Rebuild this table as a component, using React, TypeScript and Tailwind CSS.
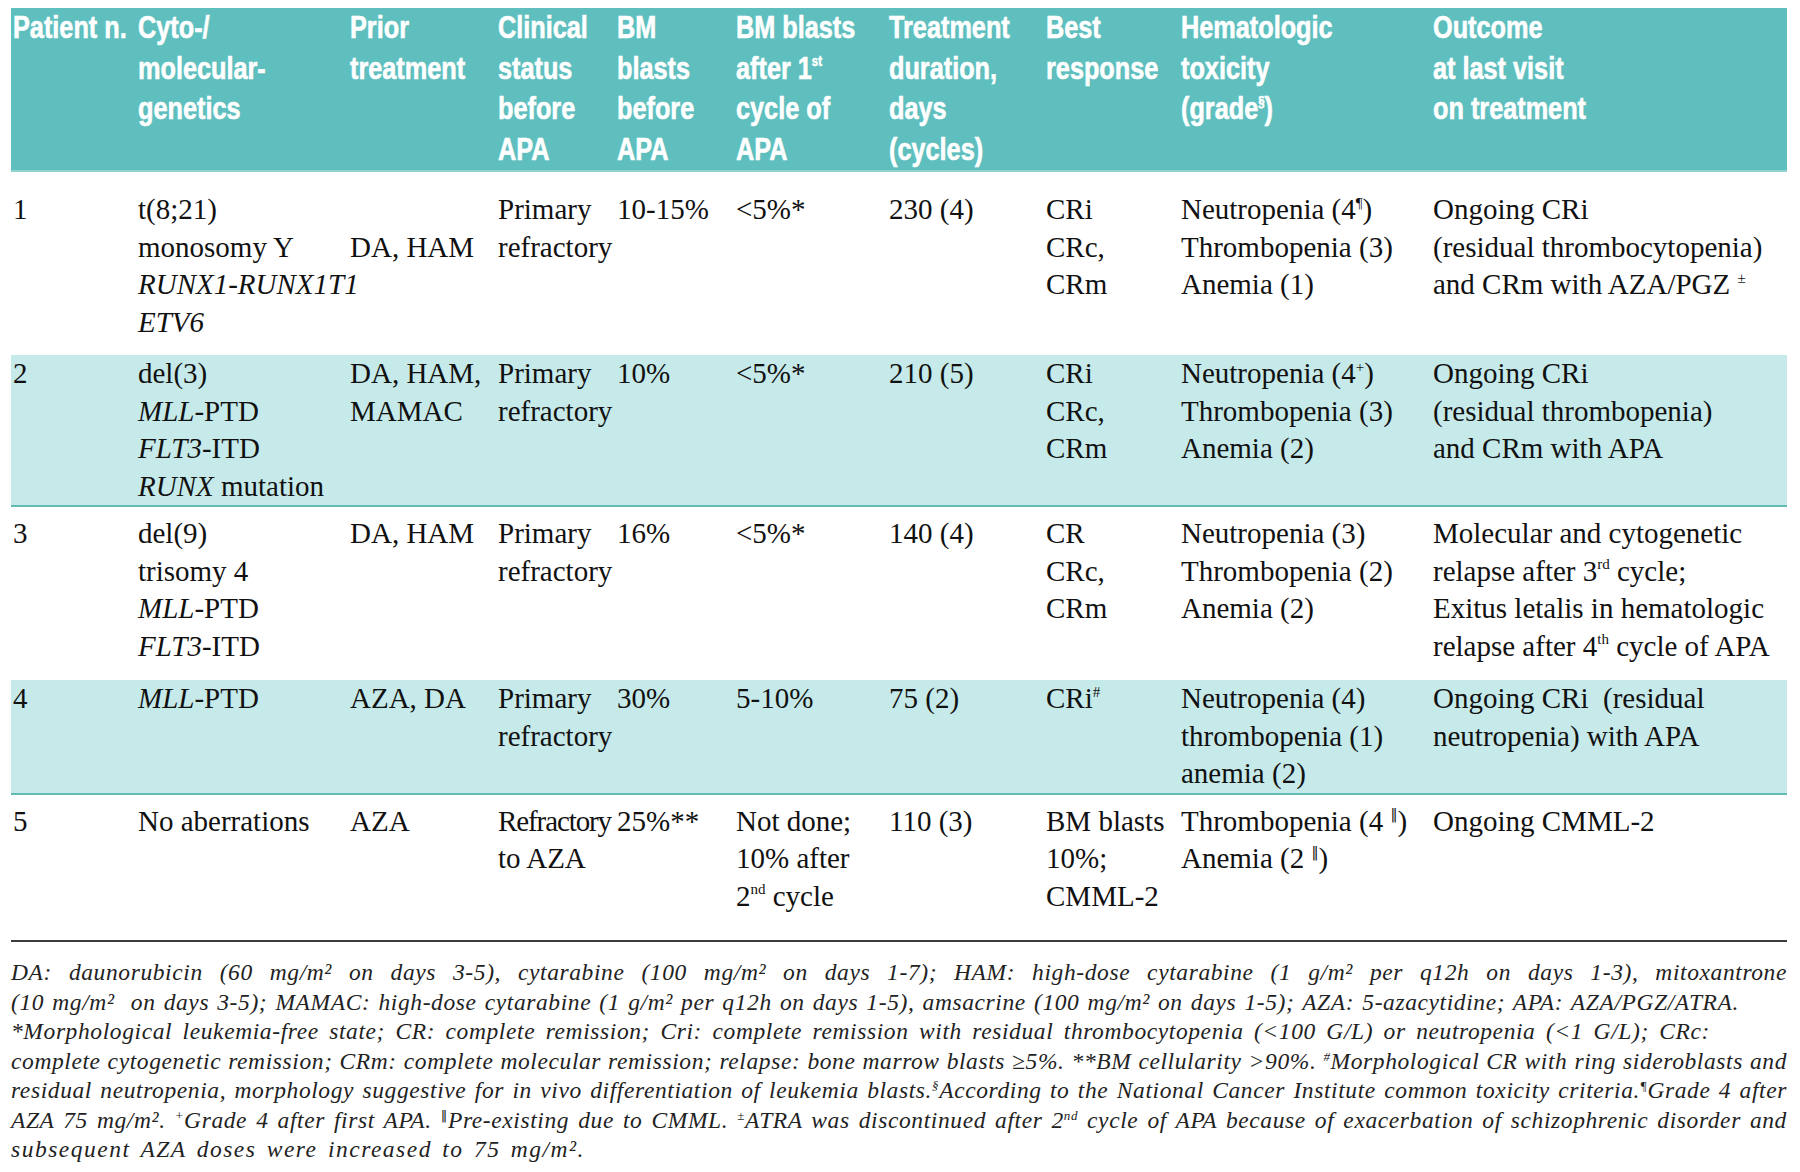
import React from "react";

const GRID =
  "grid grid-cols-[127px_212px_148px_119px_119px_153px_157px_135px_252px_354px]";

function Sup({ children }: { children: React.ReactNode }) {
  return <sup className="text-[15px] -top-[0.75em]">{children}</sup>;
}

function Bars() {
  return <sup className="text-[14px] -top-[0.8em] font-['DejaVu_Sans',sans-serif]">‖</sup>;
}

function Cell({ lines, first }: { lines: React.ReactNode[]; first?: boolean }) {
  return (
    <div className={first ? "whitespace-nowrap pl-[2px]" : "whitespace-nowrap"}>
      {lines.map((l, i) => (
        <div key={i}>{l === "" ? "\u00a0" : l}</div>
      ))}
    </div>
  );
}

function HeadCell({ lines, first }: { lines: React.ReactNode[]; first?: boolean }) {
  return (
    <div className={first ? "whitespace-nowrap pl-[2px]" : "whitespace-nowrap"}>
      <div className="origin-left scale-x-[0.815]">
        {lines.map((l, i) => (
          <div key={i}>{l}</div>
        ))}
      </div>
    </div>
  );
}

function Row({ cells, cls }: { cells: React.ReactNode[][]; cls: string }) {
  return (
    <div className={GRID + " " + cls}>
      {cells.map((c, i) => (
        <Cell key={i} lines={c} first={i === 0} />
      ))}
    </div>
  );
}

const I = ({ children }: { children: React.ReactNode }) => <i>{children}</i>;

export default function App() {
  const head: React.ReactNode[][] = [
    ["Patient n."],
    ["Cyto-/", "molecular-", "genetics"],
    ["Prior", "treatment"],
    ["Clinical", "status", "before", "APA"],
    ["BM", "blasts", "before", "APA"],
    [
      "BM blasts",
      <span>
        after 1<sup className="text-[14px] -top-[0.9em]">st</sup>
      </span>,
      "cycle of",
      "APA",
    ],
    ["Treatment", "duration,", "days", "(cycles)"],
    ["Best", "response"],
    [
      "Hematologic",
      "toxicity",
      <span>
        (grade<sup className="text-[14px] -top-[0.9em]">§</sup>)
      </span>,
    ],
    ["Outcome", "at last visit", "on treatment"],
  ];

  const r1: React.ReactNode[][] = [
    ["1"],
    ["t(8;21)", "monosomy Y", <I>RUNX1-RUNX1T1</I>, <I>ETV6</I>],
    ["", "DA, HAM"],
    ["Primary", "refractory"],
    ["10-15%"],
    ["<5%*"],
    ["230 (4)"],
    ["CRi", "CRc,", "CRm"],
    [
      <span>
        Neutropenia (4<Sup>¶</Sup>)
      </span>,
      "Thrombopenia (3)",
      "Anemia (1)",
    ],
    [
      "Ongoing CRi",
      "(residual thrombocytopenia)",
      <span>
        and CRm with AZA/PGZ <Sup>±</Sup>
      </span>,
    ],
  ];

  const r2: React.ReactNode[][] = [
    ["2"],
    [
      "del(3)",
      <span>
        <I>MLL</I>-PTD
      </span>,
      <span>
        <I>FLT3</I>-ITD
      </span>,
      <span>
        <I>RUNX</I> mutation
      </span>,
    ],
    ["DA, HAM,", "MAMAC"],
    ["Primary", "refractory"],
    ["10%"],
    ["<5%*"],
    ["210 (5)"],
    ["CRi", "CRc,", "CRm"],
    [
      <span>
        Neutropenia (4<Sup>+</Sup>)
      </span>,
      "Thrombopenia (3)",
      "Anemia (2)",
    ],
    ["Ongoing CRi", "(residual thrombopenia)", "and CRm with APA"],
  ];

  const r3: React.ReactNode[][] = [
    ["3"],
    [
      "del(9)",
      "trisomy 4",
      <span>
        <I>MLL</I>-PTD
      </span>,
      <span>
        <I>FLT3</I>-ITD
      </span>,
    ],
    ["DA, HAM"],
    ["Primary", "refractory"],
    ["16%"],
    ["<5%*"],
    ["140 (4)"],
    ["CR", "CRc,", "CRm"],
    ["Neutropenia (3)", "Thrombopenia (2)", "Anemia (2)"],
    [
      "Molecular and cytogenetic",
      <span>
        relapse after 3<Sup>rd</Sup> cycle;
      </span>,
      "Exitus letalis in hematologic",
      <span>
        relapse after 4<Sup>th</Sup> cycle of APA
      </span>,
    ],
  ];

  const r4: React.ReactNode[][] = [
    ["4"],
    [
      <span>
        <I>MLL</I>-PTD
      </span>,
    ],
    ["AZA, DA"],
    ["Primary", "refractory"],
    ["30%"],
    ["5-10%"],
    ["75 (2)"],
    [
      <span>
        CRi<Sup>#</Sup>
      </span>,
    ],
    ["Neutropenia (4)", "thrombopenia (1)", "anemia (2)"],
    ["Ongoing CRi\u00a0 (residual", "neutropenia) with APA"],
  ];

  const r5: React.ReactNode[][] = [
    ["5"],
    ["No aberrations"],
    ["AZA"],
    [<span className="tracking-[-1.1px]">Refractory</span>, "to AZA"],
    ["25%**"],
    [
      "Not done;",
      "10% after",
      <span>
        2<Sup>nd</Sup> cycle
      </span>,
    ],
    ["110 (3)"],
    ["BM blasts", "10%;", "CMML-2"],
    [
      <span>
        Thrombopenia (4 <Bars />)
      </span>,
      <span>
        Anemia (2 <Bars />)
      </span>,
    ],
    ["Ongoing CMML-2"],
  ];

  const fs = "text-[13px] -top-[0.6em]";
  const J = "whitespace-nowrap text-justify [text-align-last:justify]";

  return (
    <div className="w-[1800px] h-[1172px] bg-white overflow-hidden">
      <div className="ml-[11px] w-[1776px] pt-[11px]">
        {/* header */}
        <div className="bg-[#5ebfbe] h-[164px] border-b-2 border-[#8fd4d0] font-['Liberation_Sans','Arial',sans-serif] font-bold text-[31px] leading-[40.5px] text-white [-webkit-text-stroke:0.6px_#ffffff]">
          <div className={GRID + " -mt-[3px]"}>
            {head.map((c, i) => (
              <HeadCell key={i} lines={c} first={i === 0} />
            ))}
          </div>
        </div>

        <div className="font-['Liberation_Serif',serif] text-[29px] leading-[37.5px] text-[#111]">
          <Row cells={r1} cls="pt-[19px] pb-[14px]" />
          <Row cells={r2} cls="bg-[#c6eaea] pb-[0px] border-b-2 border-[#62bbb5]" />
          <Row cells={r3} cls="pt-[8px] pb-[15px]" />
          <Row cells={r4} cls="bg-[#c6eaea] pb-[0px] border-b-2 border-[#62bbb5]" />
          <Row cells={r5} cls="pt-[8px] pb-[25px]" />
        </div>

        <div className="border-t-2 border-[#3c3c3c] pt-[16px] font-['Liberation_Serif',serif] italic text-[23.5px] leading-[29.5px] tracking-[0.6px] text-[#222]">
          <div className={J + " w-[1776px]"}>
            DA: daunorubicin (60 mg/m² on days 3-5), cytarabine (100 mg/m² on days 1-7); HAM: high-dose
            cytarabine (1 g/m² per q12h on days 1-3), mitoxantrone
          </div>
          <div className={J + " w-[1728px]"}>
            (10 mg/m²&nbsp; on days 3-5); MAMAC: high-dose cytarabine (1 g/m² per q12h on days 1-5), amsacrine
            (100 mg/m² on days 1-5); AZA: 5-azacytidine; APA: AZA/PGZ/ATRA.
          </div>
          <div className={J + " w-[1699px]"}>
            *Morphological leukemia-free state; CR: complete remission; Cri: complete remission with residual
            thrombocytopenia (&lt;100 G/L) or neutropenia (&lt;1 G/L); CRc:
          </div>
          <div className={J + " w-[1776px]"}>
            complete cytogenetic remission; CRm: complete molecular remission; relapse: bone marrow blasts ≥5%.
            **BM cellularity &gt;90%. <sup className={fs}>#</sup>Morphological CR with ring sideroblasts and
          </div>
          <div className={J + " w-[1776px]"}>
            residual neutropenia, morphology suggestive for in vivo differentiation of leukemia blasts.
            <sup className={fs}>§</sup>According to the National Cancer Institute common toxicity criteria.
            <sup className={fs}>¶</sup>Grade 4 after
          </div>
          <div className={J + " w-[1776px]"}>
            AZA 75 mg/m². <sup className={fs}>+</sup>Grade 4 after first APA.{" "}
            <sup className={fs + " font-['DejaVu_Sans',sans-serif] not-italic"}>‖</sup>
            Pre-existing due to CMML. <sup className={fs}>±</sup>ATRA was discontinued after 2
            <sup className={fs}>nd</sup> cycle of APA because of exacerbation of schizophrenic disorder and
          </div>
          <div className={J + " w-[574px] tracking-[1.5px]"}>
            subsequent AZA doses were increased to 75 mg/m².
          </div>
        </div>
      </div>
    </div>
  );
}
